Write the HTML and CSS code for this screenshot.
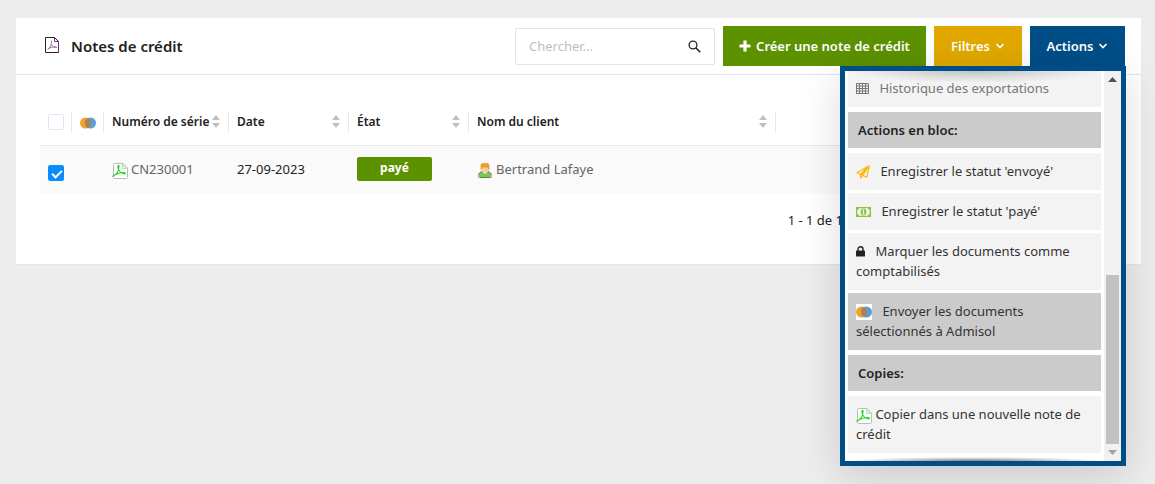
FILE: index.html
```
<!DOCTYPE html>
<html lang="fr">
<head>
    <meta charset="utf-8">
    <meta name="viewport" content="width=device-width, initial-scale=1.0">
    <title>Notes de crédit</title>
    <link rel="stylesheet" href="styles.css">
</head>
<body>

    <!-- icons used more than once -->
    <svg class="sprite">
        <symbol id="pdf" viewBox="0 0 16 16">
            <path d="M2.500 .5h8.500l4.500 4.500v9.500q0 1-1 1h-12q-1 0-1-1v-13q0-1 1-1z" fill="#fff" stroke="#bdbdbd"/>
            <path d="M10.500 1l4.500 4.500h-4.500z" fill="#d9f5d9" stroke="#8ed88e" stroke-width=".6"/>
            <path d="M.5 13.500C4 12 7 8 7 3.200C7 1.500 5.500 2.500 6 4.500C6.700 8 9 10.500 12.500 10.800C14 10.800 13.500 9.500 11.500 9.500C8 9.500 4 10.800 .5 13.500z" fill="none" stroke="#1fd31f" stroke-width="1.200"/>
        </symbol>
        <symbol id="circles" viewBox="0 0 16 16">
            <circle cx="5.500" cy="8" r="5.500" fill="#f2a12e"/>
            <circle cx="10.500" cy="8" r="5.500" fill="#5d9fd0"/>
            <path d="M8 3.100a5.500 5.500 0 0 1 0 9.800a5.500 5.500 0 0 1 0-9.800z" fill="#a9825a"/>
        </symbol>
        <symbol id="sort" viewBox="0 0 8 13">
            <path d="M4 0l4 5H0zM4 13l4-5H0z" fill="#bfbfbf"/>
        </symbol>
        <symbol id="chevron" viewBox="0 0 10 8">
            <path d="M1.500 2l3.500 3.500L8.500 2" fill="none" stroke="#fff" stroke-width="1.600"/>
        </symbol>
    </svg>

    <div class="panel">
        <div class="panel-header">
            <svg width="16" height="18" viewBox="0 0 16 18">
                <path d="M1.500 .5h9l4 4v11h-13z" fill="#fff" stroke="#222"/>
                <path d="M14.500 4.500v11M10.500 .5v4h4" fill="none" stroke="#8b1d8b"/>
                <path d="M3.500 12.500C6 11 8 7.500 7.500 3.500M7.500 7.500C8.500 9.500 10 10.500 13 10.500M4 12C6 10.500 9 9.500 12.500 10" fill="none" stroke="#777" stroke-width=".9"/>
            </svg>
            <h1>Notes de crédit</h1>

            <form class="search">
                <input type="text" placeholder="Chercher..." aria-label="Chercher">
                <button type="button" aria-label="Lancer la recherche">
                    <svg width="13" height="13" viewBox="0 0 13 13">
                        <circle cx="5" cy="5" r="3.900" fill="none" stroke="#222" stroke-width="1.300"/>
                        <path d="M7.800 7.800l4.400 4.400" stroke="#222" stroke-width="1.600"/>
                    </svg>
                </button>
            </form>

            <button class="btn green">
                <svg width="12" height="12" viewBox="0 0 12 12"><path d="M6 .5v11M.5 6h11" stroke="#fff" stroke-width="3.200"/></svg>
                Créer une note de crédit
            </button>
            <button class="btn yellow">Filtres <svg width="10" height="8"><use href="#chevron"/></svg></button>

            <div class="dropdown">
                <button class="btn blue">Actions <svg width="10" height="8"><use href="#chevron"/></svg></button>
                <div class="menu">
                    <div class="menu-list">
                        <a href="#" class="item muted">
                            <svg width="13" height="11" viewBox="0 0 13 11"><path d="M.5.5h12v10H.5zM.5 3h12M.5 5.500h12M.5 8h12M3.500 1v9.500M6.500 1v9.500M9.500 1v9.500" fill="none" stroke="#777"/></svg>
                            Historique des exportations
                        </a>
                        <h2>Actions en bloc:</h2>
                        <a href="#" class="item">
                            <svg class="i-plane" width="14" height="14" viewBox="0 0 14 14"><path d="M13.200 .8L1 7.500l3.200 1.700zM13.200.8L4.500 9.500V13l2.200-2.600zM13.200.8l-2.400 11.400-5-2.200z" fill="none" stroke="#fdb913" stroke-width="1.200" stroke-linejoin="round"/></svg>
                            Enregistrer le statut 'envoyé'
                        </a>
                        <a href="#" class="item">
                            <svg width="15" height="10" viewBox="0 0 15 10"><path d="M0 0h15v10H0z" fill="#8cc63f"/><path d="M3 1.300h9q0 1.700 1.700 1.700v4q-1.700 0-1.700 1.700H3Q3 7 1.300 7V3Q3 3 3 1.300z" fill="#f3f3f3"/><ellipse cx="7.500" cy="5" rx="2.900" ry="3.500" fill="#8cc63f"/><path d="M6.500 3.500l1-.7v4M6.300 7h2.500" fill="none" stroke="#f3f3f3"/></svg>
                            Enregistrer le statut 'payé'
                        </a>
                        <a href="#" class="item">
                            <svg width="9" height="11" viewBox="0 0 9 11"><path d="M2 5V3.200a2.500 2.500 0 0 1 5 0V5" fill="none" stroke="#222" stroke-width="1.400"/><rect y="4.600" width="9" height="6" rx=".7" fill="#222"/></svg>
                            Marquer les documents comme comptabilisés
                        </a>
                        <a href="#" class="item active">
                            <svg class="i-circles" width="16" height="16"><use href="#circles"/></svg>
                            Envoyer les documents sélectionnés à Admisol
                        </a>
                        <h2>Copies:</h2>
                        <a href="#" class="item">
                            <svg class="i-pdf" width="16" height="16"><use href="#pdf"/></svg>
                            Copier dans une nouvelle note de crédit
                        </a>
                    </div>
                    <div class="scrollbar">
                        <svg width="9" height="5" viewBox="0 0 9 5"><path d="M4.500 0L9 5H0z" fill="#505050"/></svg>
                        <div class="thumb"></div>
                        <svg width="9" height="5" viewBox="0 0 9 5"><path d="M4.500 5L9 0H0z" fill="#a3a3a3"/></svg>
                    </div>
                </div>
            </div>
        </div>

        <div class="panel-body">
            <table>
                <thead>
                    <tr>
                        <th class="c-check"><input type="checkbox" aria-label="Tout sélectionner"></th>
                        <th class="c-icon"><svg width="16" height="16"><use href="#circles"/></svg></th>
                        <th class="c-serie"><div>Numéro de série<svg width="8" height="13"><use href="#sort"/></svg></div></th>
                        <th class="c-date"><div>Date<svg width="8" height="13"><use href="#sort"/></svg></div></th>
                        <th class="c-date"><div>État<svg width="8" height="13"><use href="#sort"/></svg></div></th>
                        <th class="c-client"><div>Nom du client<svg width="8" height="13"><use href="#sort"/></svg></div></th>
                        <th></th>
                    </tr>
                </thead>
                <tbody>
                    <tr>
                        <td><input type="checkbox" aria-label="Sélectionner CN230001" checked></td>
                        <td></td>
                        <td><a href="#"><svg width="16" height="16"><use href="#pdf"/></svg>CN230001</a></td>
                        <td>27-09-2023</td>
                        <td><span class="badge">payé</span></td>
                        <td>
                            <a href="#">
                                <svg width="16" height="16" viewBox="0 0 16 16">
                                    <path d="M1.500 14.500q-.5-5 3.500-6h6q4 1 3.500 6z" fill="#7fc35a" stroke="#4b8a35"/>
                                    <path d="M1 12h2v3H1zM13 12h2v3h-2z" fill="#e9a27a"/>
                                    <path d="M5.500 8.500L8 11l2.500-2.500z" fill="#fff"/>
                                    <rect x="4.500" y="2.500" width="7" height="7" rx="2.500" fill="#f7c9a0"/>
                                    <path d="M4 6.500V2.500q0-2 2-2h4q2 0 2 2v4l-1-2.500h-6z" fill="#eda321" stroke="#d58a14" stroke-width=".6"/>
                                </svg>Bertrand Lafaye
                            </a>
                        </td>
                        <td></td>
                    </tr>
                </tbody>
            </table>
            <div class="pagination">1 - 1 de 1</div>
        </div>
    </div>

</body>
</html>
```
FILE: styles.css
```
* {
    box-sizing: border-box;
}

body {
    min-height: 100vh;
    margin: 0;
    padding: 18px 14px 18px 16px;
    font-family: "Noto Sans", "Open Sans", sans-serif;
    font-size: 13px;
    line-height: 20px;
    color: #222;
    background-color: #ededed;
}

a {
    color: #666;
    text-decoration: none;
}

button,
input {
    font-family: inherit;
    font-size: 13px;
}

.sprite {
    display: none;
}

.panel {
    background-color: #fff;
    border-bottom: 1px solid #e1e6ef;
}

/* header */
.panel-header {
    display: flex;
    align-items: center;
    gap: 8px;
    height: 57px;
    padding: 0 16px 0 28px;
    border-bottom: 1px solid #e1e6ef;
}

h1 {
    flex: 1;
    margin: 0 0 0 3px;
    font-size: 15px;
    font-weight: 600;
}

.search {
    display: flex;
    width: 200px;
    height: 37px;
    border: 1px solid #dfe5ee;
    border-radius: 2px;
}

.search input {
    flex: 1;
    min-width: 0;
    padding: 0 13px;
    border: none;
    background: none;
}

.search input::placeholder {
    color: #b8bfca;
}

.search button {
    display: flex;
    align-items: center;
    padding: 0 13px;
    border: none;
    background: none;
}

.btn {
    display: flex;
    align-items: center;
    justify-content: center;
    gap: 5px;
    height: 40px;
    padding: 0;
    border: none;
    color: #fff;
    font-weight: 600;
    white-space: nowrap;
    cursor: pointer;
}

.green {
    width: 203px;
    background-color: #5c9100;
}

.yellow {
    width: 88px;
    background-color: #e2a800;
}

.blue {
    width: 95px;
    background-color: #004e87;
}

/* actions menu */
.dropdown {
    position: relative;
}

.menu {
    position: absolute;
    top: 100%;
    right: -1px;
    display: flex;
    width: 286px;
    height: 400px;
    border: 5px solid #004e87;
    background-color: #fff;
    box-shadow: 0 10px 40px rgba(0, 0, 0, 0.15);
}

.menu::before,
.menu::after {
    content: "";
    position: absolute;
    left: 0;
    right: 17px;
    top: 0;
    height: 12px;
    background: radial-gradient(farthest-side at 50% 0, rgba(0, 0, 0, 0.2), rgba(0, 0, 0, 0));
    pointer-events: none;
}

.menu::after {
    top: auto;
    bottom: 0;
    height: 4px;
    background: radial-gradient(farthest-side at 50% 100%, rgba(0, 0, 0, 0.5), rgba(0, 0, 0, 0));
}

/* scrolled to the end of the list */
.menu-list {
    flex: 1;
    display: flex;
    flex-direction: column;
    justify-content: flex-end;
    gap: 3px;
    padding: 0 3px 8px;
    overflow: hidden;
}

.item {
    flex-shrink: 0;
    padding: 8px 8px 9px;
    color: #333;
    background-color: #f3f3f3;
}

.item svg {
    margin-right: 7px;
    vertical-align: -1px;
}

.item .i-plane {
    vertical-align: -3px;
}

.item .i-circles {
    background-color: #fff;
    vertical-align: -4px;
}

.item .i-pdf {
    margin-right: 0;
    vertical-align: -5px;
}

.muted {
    color: #777;
}

.active {
    background-color: #cbcbcb;
}

.menu h2 {
    flex-shrink: 0;
    margin: 2px 0;
    padding: 8px 10px;
    font-size: 13px;
    font-weight: 600;
    background-color: #cbcbcb;
}

.scrollbar {
    display: flex;
    flex-direction: column;
    align-items: center;
    width: 17px;
    padding: 6px 0;
    background-color: #f1f1f1;
}

.thumb {
    width: 13px;
    height: 169px;
    margin: auto 0 6px;
    background-color: #c1c1c1;
}

/* table */
.panel-body {
    padding: 24px 24px 34px;
}

table {
    width: 100%;
    table-layout: fixed;
    border-collapse: collapse;
}

th,
td {
    height: 48px;
    padding: 0 8px;
    text-align: left;
    white-space: nowrap;
}

th {
    height: 46px;
    padding: 0;
    font-size: 12px;
    font-weight: 600;
    border-bottom: 1px solid #e8e8e8;
}

th div {
    display: flex;
    align-items: center;
    justify-content: space-between;
    padding: 0 8px;
    border-right: 1px solid #e8e8e8;
}

.c-check,
.c-icon {
    width: 32px;
    padding: 0 8px;
    background: linear-gradient(#e8e8e8, #e8e8e8) no-repeat right center / 1px 20px;
}

.c-serie {
    width: 125px;
}

.c-date {
    width: 120px;
}

.c-client {
    width: 307px;
}

td {
    background-color: #fafafa;
}

th svg,
td svg {
    flex-shrink: 0;
    vertical-align: middle;
}

td a svg {
    margin-right: 3px;
}

input[type="checkbox"] {
    appearance: none;
    display: block;
    width: 16px;
    height: 16px;
    margin: 0;
    border: 1px solid #dfe5ee;
    border-radius: 2px;
    background-color: #fff;
}

input[type="checkbox"]:checked {
    position: relative;
    margin-top: 7px;
    border-color: #0a8cff;
    background-color: #0a8cff;
}

input[type="checkbox"]:checked::after {
    content: "";
    position: absolute;
    left: 5px;
    top: 2px;
    width: 4px;
    height: 8px;
    border: solid #fff;
    border-width: 0 2px 2px 0;
    transform: rotate(45deg);
}

.badge {
    display: block;
    width: 75px;
    height: 24px;
    border-radius: 2px;
    line-height: 22px;
    text-align: center;
    font-size: 12px;
    font-weight: 700;
    color: #fff;
    background-color: #5c9100;
}

.pagination {
    margin: 17px 274px 0 0;
    text-align: right;
}
```
